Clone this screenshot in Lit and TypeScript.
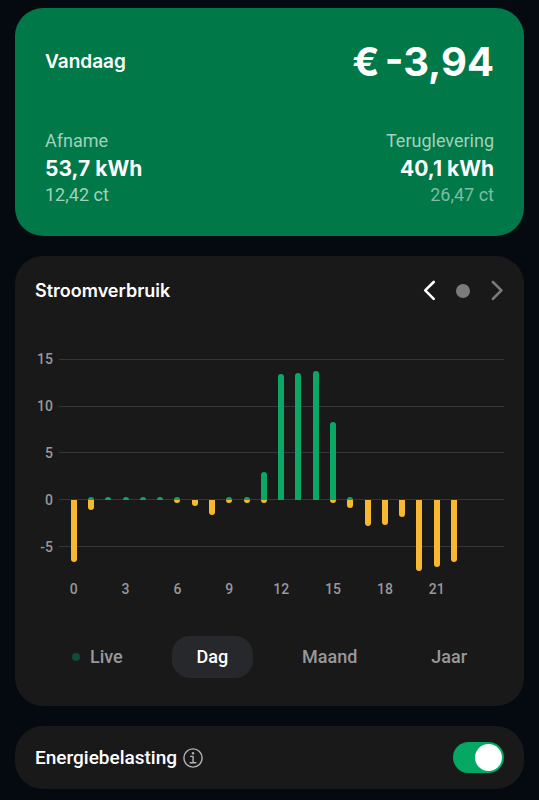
import { LitElement, html, css, nothing } from "lit";
import { customElement, state } from "lit/decorators.js";
import { classMap } from "lit/directives/class-map.js";

interface Hour {
  up: number;
  down: number;
}

const TICKS = [15, 10, 5, 0, -5];
/* Units drawn above and below the zero line. */
const RANGE_UP = 17.5;
const RANGE_DOWN = 7.5;

const HOURS: Hour[] = [
  [0, 6.6], [0.3, 1.1], [0.3, 0], [0.3, 0], [0.3, 0], [0.3, 0],
  [0.3, 0.3], [0, 0.7], [0, 1.6], [0.3, 0.3], [0.3, 0.3], [2.95, 0.3],
  [13.4, 0], [13.55, 0], [13.8, 0], [8.3, 0.3], [0.3, 0.85], [0, 2.8],
  [0, 2.7], [0, 1.8], [0, 7.6], [0, 7.15], [0, 6.6], [0, 0],
].map(([up, down]) => ({ up, down }));

const PERIODS = ["Live", "Dag", "Maand", "Jaar"];

@customElement("usage-chart")
export class UsageChart extends LitElement {
  static styles = css`
    :host {
      display: block;
      color: #98989b;
      font: 500 14px/20px Roboto, sans-serif;
    }
    .chart {
      display: grid;
      grid-template-columns: 18px minmax(0, 1fr);
      column-gap: 6px;
    }
    .ticks,
    .lines,
    .bars {
      grid-row: 1;
      height: 234px;
    }
    .ticks,
    .lines {
      display: grid;
      grid-template-rows: repeat(5, 1fr);
      align-items: center;
    }
    .ticks {
      justify-items: end;
    }
    .lines,
    .bars {
      grid-column: 2;
    }
    .line {
      height: 1px;
      background: #353639;
    }
    .bars,
    .hours {
      display: grid;
      grid-template-columns: repeat(24, minmax(0, 1fr));
      padding: 0 24px 0 6px;
    }
    .hour {
      display: grid;
      grid-template-rows: 70% 30%;
      justify-items: center;
    }
    .bar {
      width: 6px;
    }
    .up {
      grid-row: 1;
      align-self: end;
      border-radius: 3px 3px 0 0;
      background: #0aa864;
    }
    .down {
      grid-row: 2;
      border-radius: 0 0 3px 3px;
      background: #f8b830;
    }
    .hours {
      grid-column: 2;
      margin-top: 9px;
    }
    .label {
      display: flex;
      justify-content: center;
    }
  `;

  render() {
    return html`
      <div class="chart">
        <div class="ticks">${TICKS.map((t) => html`<span>${t}</span>`)}</div>
        <div class="lines">${TICKS.map(() => html`<div class="line"></div>`)}</div>
        <div class="bars">
          ${HOURS.map(
            (h) => html`<div class="hour">
              ${h.up
                ? html`<div class="bar up" style="height:${(h.up / RANGE_UP) * 100}%"></div>`
                : nothing}
              ${h.down
                ? html`<div class="bar down" style="height:${(h.down / RANGE_DOWN) * 100}%"></div>`
                : nothing}
            </div>`
          )}
        </div>
        <div class="hours">
          ${HOURS.map((_, i) => html`<div class="label">${i % 3 === 0 ? i : nothing}</div>`)}
        </div>
      </div>
    `;
  }
}

@customElement("app-root")
export class AppRoot extends LitElement {
  @state() private period = "Dag";

  static styles = css`
    :host {
      display: block;
      box-sizing: border-box;
      min-height: 100vh;
      padding: 8px 15px 11px;
      background: #050a11;
      color: #fff;
      font: 400 18px/24px Roboto, sans-serif;
    }
    main {
      display: flex;
      flex-direction: column;
      gap: 20px;
    }
    .card {
      border-radius: 28px;
      background: #19191a;
    }
    h2 {
      margin: 0;
      font: 600 18px/24px Inter, sans-serif;
    }
    .today {
      padding: 30px 30px 31px;
      background: #007848;
    }
    .today h2 {
      font-size: 19px;
    }
    .row {
      display: flex;
      align-items: center;
      justify-content: space-between;
    }
    .total {
      display: flex;
      gap: 5px;
      font: 700 40px/48px Inter, sans-serif;
    }
    .flows {
      margin-top: 43px;
    }
    .flow {
      display: flex;
      flex-direction: column;
      color: #a3d0bc;
    }
    .returned {
      align-items: flex-end;
    }
    .amount {
      color: #fff;
      font: 700 21px/32px Inter, sans-serif;
    }
    .price {
      line-height: 20px;
    }
    .returned .price {
      color: #7fbca3;
    }
    .usage {
      padding: 20px 20px 28px;
    }
    .usage .row {
      height: 30px;
    }
    .pager {
      display: flex;
      align-items: center;
      gap: 20px;
    }
    button {
      border: 0;
      padding: 0;
      background: none;
      color: inherit;
      font: inherit;
      cursor: pointer;
    }
    .arrow {
      display: flex;
      width: 14px;
      height: 24px;
    }
    .arrow:disabled {
      color: #7b7b7d;
      cursor: default;
    }
    .now {
      width: 14px;
      height: 14px;
      border-radius: 50%;
      background: #7b7b7d;
    }
    usage-chart {
      margin-top: 30px;
    }
    .periods {
      display: flex;
      justify-content: space-around;
      margin-top: 37px;
    }
    .period {
      display: flex;
      align-items: center;
      gap: 10px;
      height: 42px;
      padding: 0 25px;
      border-radius: 18px;
      color: #98989b;
      font-weight: 500;
    }
    .selected {
      background: #27282c;
      color: #fff;
    }
    .dot {
      width: 8px;
      height: 8px;
      border-radius: 50%;
      background: #124c35;
    }
    .tax {
      padding: 16px 20px;
      font-size: 19px;
      font-weight: 500;
    }
    .name {
      display: flex;
      align-items: center;
      gap: 6px;
    }
    .info {
      display: flex;
      color: #b4b4b6;
    }
    .switch {
      appearance: none;
      box-sizing: border-box;
      display: flex;
      width: 51px;
      height: 31px;
      margin: 0;
      padding: 2px;
      border-radius: 16px;
      background: #55565a;
      cursor: pointer;
    }
    .switch::before {
      content: "";
      width: 27px;
      height: 27px;
      border-radius: 50%;
      background: #fff;
    }
    .switch:checked {
      justify-content: flex-end;
      background: #04a863;
    }
  `;

  render() {
    return html`
      <main>
        <section class="card today">
          <div class="row">
            <h2>Vandaag</h2>
            <div class="total"><span>€</span> <span>-3,94</span></div>
          </div>
          <div class="row flows">
            <div class="flow">
              <span>Afname</span>
              <span class="amount">53,7 kWh</span>
              <span class="price">12,42 ct</span>
            </div>
            <div class="flow returned">
              <span>Teruglevering</span>
              <span class="amount">40,1 kWh</span>
              <span class="price">26,47 ct</span>
            </div>
          </div>
        </section>

        <section class="card usage">
          <div class="row">
            <h2>Stroomverbruik</h2>
            <div class="pager">
              <button class="arrow" aria-label="Vorige dag">
                <svg width="14" height="24" viewBox="0 0 14 24" fill="none" stroke="currentColor"
                  stroke-width="2.6" stroke-linecap="round" stroke-linejoin="round">
                  <path d="M11.7 3 3.2 11.4l8.5 8.4" />
                </svg>
              </button>
              <button class="now" aria-label="Vandaag"></button>
              <button class="arrow" aria-label="Volgende dag" disabled>
                <svg width="14" height="24" viewBox="0 0 14 24" fill="none" stroke="currentColor"
                  stroke-width="2.6" stroke-linecap="round" stroke-linejoin="round">
                  <path d="M2.9 3 11.4 11.4l-8.5 8.4" />
                </svg>
              </button>
            </div>
          </div>
          <usage-chart></usage-chart>
          <div class="periods">
            ${PERIODS.map(
              (p) => html`<button
                class=${classMap({ period: true, selected: p === this.period })}
                aria-pressed=${p === this.period}
                @click=${() => (this.period = p)}
              >
                ${p === "Live" ? html`<span class="dot"></span>` : nothing}${p}
              </button>`
            )}
          </div>
        </section>

        <section class="card tax row">
          <div class="name">
            <label for="tax">Energiebelasting</label>
            <button class="info" aria-label="Uitleg">
              <svg width="20" height="20" viewBox="0 0 20 20" fill="none" stroke="currentColor"
                stroke-width="1.4" stroke-linecap="round" stroke-linejoin="round">
                <circle cx="10" cy="10" r="9.1" />
                <path d="M7.7 8.4h2.4v6.2M7.1 14.8h5.8" />
                <circle cx="10" cy="5.3" r="1.2" fill="currentColor" stroke="none" />
              </svg>
            </button>
          </div>
          <input class="switch" id="tax" type="checkbox" role="switch" checked />
        </section>
      </main>
    `;
  }
}
